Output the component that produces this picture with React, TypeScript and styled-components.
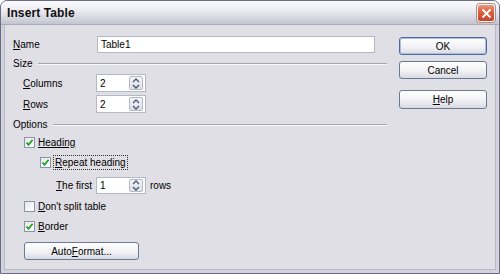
import React from 'react';
import styled, { createGlobalStyle } from 'styled-components';

const GlobalStyle = createGlobalStyle`
  html, body {
    margin: 0;
    padding: 0;
    background: #ffffff;
  }
  body {
    font-family: 'Liberation Sans', Arial, sans-serif;
    font-size: 10px;
    color: #000;
  }
`;

const Window = styled.div`
  width: 500px;
  height: 274px;
  box-sizing: border-box;
  border: 1px solid #6c6c84;
  border-radius: 7px 7px 0 0;
  overflow: hidden;
  display: flex;
  flex-direction: column;
  background: #cfcfd9;
`;

const TitleBar = styled.div`
  height: 24px;
  flex: none;
  display: flex;
  align-items: center;
  justify-content: space-between;
  padding: 0 4px 0 6px;
  background: linear-gradient(to bottom, #fbfbfd 0%, #eeeef3 35%, #d9d9e2 70%, #c4c4d0 100%);
  border-bottom: 1px solid #a9a9b8;
  box-sizing: border-box;
`;

const Title = styled.span`
  font-weight: bold;
  font-size: 12px;
  letter-spacing: 0.1px;
  color: #111;
  margin-top: 1px;
`;

const CloseBtn = styled.div`
  width: 18px;
  height: 18px;
  box-sizing: border-box;
  border-radius: 3px;
  border: 1px solid #f4f4f4;
  box-shadow: 0 0 0 1px #b4917e;
  background: linear-gradient(to bottom, #e9977f 0%, #d9603f 45%, #c9442a 100%);
  display: flex;
  align-items: center;
  justify-content: center;
  margin-top: 1px;
`;

const Frame = styled.div`
  flex: 1;
  display: flex;
  padding: 0 3px 3px 3px;
  background: #d2d2dc;
`;

const Body = styled.div`
  flex: 1;
  display: flex;
  background: #e0dfe5;
  box-shadow: inset 1px 0 0 #b8b8c6, inset -1px 0 0 #b8b8c6, inset 0 -1px 0 #b8b8c6;
  padding: 0 0 0 9px;
`;

const LeftPane = styled.div`
  width: 374px;
  display: flex;
  flex-direction: column;
`;

const RightPane = styled.div`
  width: 88px;
  margin-left: 12px;
  padding-top: 12px;
  display: flex;
  flex-direction: column;
`;

const Row = styled.div<{ $top: number; $indent?: number; $h: number }>`
  display: flex;
  align-items: center;
  height: ${p => p.$h}px;
  margin-top: ${p => p.$top}px;
  padding-left: ${p => p.$indent || 0}px;
`;

const Label = styled.span<{ $w?: number }>`
  width: ${p => (p.$w ? `${p.$w}px` : 'auto')};
  flex: none;
  white-space: nowrap;
`;

const Key = styled.span`
  text-decoration: underline;
`;

const TextInput = styled.div<{ $w: number }>`
  width: ${p => p.$w}px;
  height: 100%;
  box-sizing: border-box;
  background: #fff;
  border: 1px solid #b4b9c6;
  display: flex;
  align-items: center;
  padding-left: 3px;
  position: relative;
`;

const SpinBox = styled.div`
  position: absolute;
  right: 2px;
  top: 1px;
  bottom: 1px;
  width: 14px;
  box-sizing: border-box;
  border: 1px solid #b3b8c8;
  border-radius: 2px;
  background: linear-gradient(to bottom, #f6f6f9, #dcdde6);
  display: flex;
  flex-direction: column;
  align-items: center;
  justify-content: space-around;
`;

const GroupHeader = styled.div<{ $top: number }>`
  display: flex;
  align-items: center;
  height: 11px;
  margin-top: ${p => p.$top}px;
  padding-left: 0;
`;

const GroupLine = styled.div`
  flex: 1;
  height: 0;
  margin-left: 6px;
  border-top: 1px solid #a7a6b0;
  border-bottom: 1px solid #f7f7fa;
`;

const Box = styled.div`
  width: 11px;
  height: 11px;
  box-sizing: border-box;
  border: 1px solid #8b93a8;
  background: linear-gradient(135deg, #e4e4ea 0%, #fbfbfc 70%);
  display: flex;
  align-items: center;
  justify-content: center;
  margin-right: 3px;
  flex: none;
`;

const Focus = styled.span`
  border: 1px dotted #333;
  padding: 1px 1px 1px 1px;
  margin-left: -1px;
`;

const Button = styled.div<{ $top?: number; $h?: number; $w?: string; $default?: boolean }>`
  width: ${p => p.$w || '100%'};
  height: ${p => p.$h || 18}px;
  margin-top: ${p => p.$top || 0}px;
  box-sizing: border-box;
  border: 1px solid ${p => (p.$default ? '#4d6a9c' : '#6e7994')};
  border-radius: 3px;
  background: linear-gradient(to bottom, #ffffff 0%, #f2f2f5 55%, #d9d9e2 100%);
  box-shadow: ${p => (p.$default ? 'inset 0 0 0 1px #a8c0e6' : 'none')};
  display: flex;
  align-items: center;
  justify-content: center;
  flex: none;
`;

const Check = () => (
  <svg width="9" height="9" viewBox="0 0 9 9">
    <path d="M1.5 4.5 L3.5 6.8 L7.6 1.8" fill="none" stroke="#22a022" strokeWidth="1.8" />
  </svg>
);

const Spinner = ({ value }: { value: string }) => (
  <TextInput $w={50}>
    {value}
    <SpinBox>
      <svg width="8" height="5" viewBox="0 0 8 5">
        <path d="M1 4 L4 1 L7 4" fill="none" stroke="#4a5a78" strokeWidth="1.4" />
      </svg>
      <svg width="8" height="5" viewBox="0 0 8 5">
        <path d="M1 1 L4 4 L7 1" fill="none" stroke="#4a5a78" strokeWidth="1.4" />
      </svg>
    </SpinBox>
  </TextInput>
);

export default function App() {
  return (
    <>
      <GlobalStyle />
      <Window>
        <TitleBar>
          <Title>Insert Table</Title>
          <CloseBtn>
            <svg width="11" height="11" viewBox="0 0 11 11">
              <path d="M1.5 1.5 L9.5 9.5 M9.5 1.5 L1.5 9.5" stroke="#fff" strokeWidth="1.8" />
            </svg>
          </CloseBtn>
        </TitleBar>
        <Frame>
          <Body>
            <LeftPane>
              <Row $top={11} $h={17}>
                <Label $w={84}><Key>N</Key>ame</Label>
                <TextInput $w={278}>Table1</TextInput>
              </Row>

              <GroupHeader $top={5}>
                <Label>Size</Label>
                <GroupLine />
              </GroupHeader>
              <Row $top={5} $h={18} $indent={10}>
                <Label $w={73}><Key>C</Key>olumns</Label>
                <Spinner value="2" />
              </Row>
              <Row $top={3} $h={18} $indent={10}>
                <Label $w={73}><Key>R</Key>ows</Label>
                <Spinner value="2" />
              </Row>

              <GroupHeader $top={6}>
                <Label>Options</Label>
                <GroupLine />
              </GroupHeader>
              <Row $top={6} $h={12} $indent={11}>
                <Box><Check /></Box>
                <Label><Key>Heading</Key></Label>
              </Row>
              <Row $top={7} $h={14} $indent={27}>
                <Box><Check /></Box>
                <Focus><Key>R</Key>epeat heading</Focus>
              </Row>
              <Row $top={8} $h={17} $indent={43}>
                <Label $w={40}><Key>T</Key>he first</Label>
                <Spinner value="1" />
                <Label style={{ marginLeft: 4 }}>rows</Label>
              </Row>
              <Row $top={6} $h={13} $indent={11}>
                <Box />
                <Label><Key>D</Key>on't split table</Label>
              </Row>
              <Row $top={7} $h={13} $indent={11}>
                <Box><Check /></Box>
                <Label><Key>B</Key>order</Label>
              </Row>
              <Row $top={9} $h={18} $indent={11}>
                <Button $w="115px">Auto<Key>F</Key>ormat...</Button>
              </Row>
            </LeftPane>

            <RightPane>
              <Button $default>OK</Button>
              <Button $top={6}>Cancel</Button>
              <Button $top={11} $h={19}><Key>H</Key>elp</Button>
            </RightPane>
          </Body>
        </Frame>
      </Window>
    </>
  );
}
